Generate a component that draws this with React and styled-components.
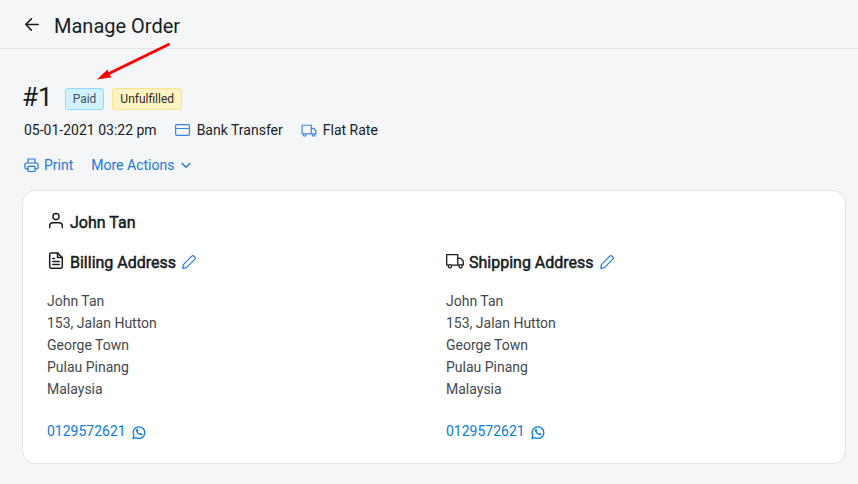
import React from "react";
import styled, { createGlobalStyle } from "styled-components";

const GlobalStyle = createGlobalStyle`
  *, *::before, *::after { box-sizing: border-box; }
  body {
    margin: 0;
    background: #f4f6f8;
    color: #161d25;
    font-family: Roboto, "Liberation Sans", sans-serif;
    font-size: 14px;
    line-height: 22px;
  }
`;

const Page = styled.div`
  min-height: 100vh;
  background: #f4f6f8;
`;

const Header = styled.header`
  position: relative;
  display: flex;
  align-items: center;
  gap: 14px;
  height: 49px;
  padding: 4px 24px 0;
  border-bottom: 1px solid #e1e3e5;
`;

const PlainButton = styled.button`
  display: inline-flex;
  align-items: center;
  padding: 0;
  border: 0;
  background: none;
  color: ${({ $tone }) => $tone || "#2079dc"};
  font: inherit;
  cursor: pointer;
`;

const Title = styled.h1`
  margin: 0;
  font-size: 20px;
  font-weight: 400;
  line-height: 28px;
`;

const Pointer = styled.svg`
  position: absolute;
  top: 40px;
  left: 94px;
  pointer-events: none;
`;

const Main = styled.main`
  padding: 32px 12px 20px 22px;
`;

const OrderHeading = styled.div`
  display: flex;
  align-items: center;
  gap: 8px;
  height: 32px;
`;

const OrderNumber = styled.h2`
  margin: 0;
  padding-right: 4px;
  font-size: 26px;
  font-weight: 400;
  line-height: 32px;
`;

const Badge = styled.span`
  height: 22px;
  margin-top: 4px;
  padding: 0 7px;
  border: 1px solid ${({ $paid }) => ($paid ? "#8fd8ff" : "#fbe38a")};
  border-radius: 3px;
  background: ${({ $paid }) => ($paid ? "#d0f2ff" : "#fff3c4")};
  color: ${({ $paid }) => ($paid ? "#41525c" : "#2b2b20")};
  font-size: 12px;
  line-height: 20px;
`;

const InfoRow = styled.div`
  display: flex;
  align-items: center;
  gap: 18px;
  margin-top: 6px;
  padding-left: 2px;
`;

const InfoItem = styled.span`
  display: inline-flex;
  align-items: center;
  gap: 6px;

  svg { color: #3b82e6; }
`;

const Actions = styled.div`
  display: flex;
  gap: 18px;
  margin-top: 13px;
  padding-left: 2px;
`;

const Action = styled(PlainButton)`
  gap: 5px;
`;

const Card = styled.section`
  margin-top: 14px;
  padding: 20px 24px;
  border: 1px solid #e1e3e5;
  border-radius: 13px;
  background: #fff;
`;

const CardHeading = styled.h3`
  display: flex;
  align-items: center;
  gap: 5px;
  margin: 0;
  font-size: 16px;
  font-weight: 400;
  -webkit-text-stroke: 0.5px currentColor;
  line-height: 24px;

  > svg { margin-bottom: 4px; }
  > button { margin-bottom: 2px; }
`;

const Columns = styled.div`
  display: grid;
  grid-template-columns: 1fr 1fr;
  gap: 24px;
  margin-top: 16px;
`;

const Address = styled.address`
  margin: 15px 0 20px;
  color: #43484e;
  font-style: normal;
`;

const Phone = styled.a`
  display: inline-flex;
  align-items: center;
  gap: 6px;
  margin-bottom: 1px;
  color: #0b7bdc;
  text-decoration: none;

  svg { margin-top: 2px; }
`;

function Icon({ width = 16, height = 16, stroke = 1.2, children }) {
  return (
    <svg
      width={width}
      height={height}
      viewBox={`0 0 ${width} ${height}`}
      fill="none"
      stroke="currentColor"
      strokeWidth={stroke}
      strokeLinecap="round"
      strokeLinejoin="round"
      aria-hidden="true"
    >
      {children}
    </svg>
  );
}

const BackIcon = () => (
  <Icon stroke={1.5}>
    <path d="M14.2 6.5H1.8M7.3 .9L1.8 6.5L7.3 12.1" />
  </Icon>
);

const CreditCardIcon = () => (
  <Icon>
    <rect x="0.6" y="2.6" width="13.8" height="10.8" rx="1.3" />
    <path d="M0.6 6.5H14.4" />
  </Icon>
);

const TruckIcon = ({ large }) => (
  <svg
    width={large ? 18 : 16}
    height={large ? 18 : 15}
    viewBox="0 0 18 18"
    fill="none"
    stroke="currentColor"
    strokeWidth={large ? 1.3 : 1.4}
    strokeLinejoin="round"
    aria-hidden="true"
  >
    <path d="M2.3 13.1H.7V2.7H11.8V13.1H5.5M11.8 6.4H14.7L17.3 9.3V13.1H16.2M11.8 13.1H13" />
    <circle cx="3.9" cy="14.2" r="1.6" />
    <circle cx="14.6" cy="14.2" r="1.6" />
  </svg>
);

const PrintIcon = () => (
  <Icon width={15}>
    <path d="M4 6V2H11V6M4 11.8H2.2C1.4 11.8 .9 11.3 .9 10.5V7.4C.9 6.6 1.4 6 2.2 6H12.8C13.6 6 14.1 6.6 14.1 7.4V10.5C14.1 11.3 13.6 11.8 12.8 11.8H11" />
    <rect x="4" y="9.3" width="7" height="5.2" rx="0.7" />
  </Icon>
);

const ChevronIcon = () => (
  <Icon width={14} stroke={1.4}>
    <path d="M3.2 6.6L7 10.2L10.8 6.6" />
  </Icon>
);

const UserIcon = () => (
  <Icon width={18} height={18} stroke={1.4}>
    <circle cx="9" cy="4.6" r="3.1" />
    <path d="M2.7 15.8V13.8C2.7 12 4.1 10.8 5.9 10.8H12.1C13.9 10.8 15.3 12 15.3 13.8V15.8" />
  </Icon>
);

const DocumentIcon = () => (
  <Icon width={18} height={18} stroke={1.5}>
    <path d="M10.5 .9H4.2C3.3 .9 2.7 1.5 2.7 2.4V14.8C2.7 15.7 3.3 16.3 4.2 16.3H13.8C14.7 16.3 15.3 15.7 15.3 14.8V5.6Z" />
    <path d="M10.5 .9V5.6H15.3M5.8 6.5H7.5M5.8 9.5H12.2M5.8 12.5H12.2" />
  </Icon>
);

const PencilIcon = () => (
  <Icon>
    <path d="M1.8 14.4L2.3 10.6L10.8 2.1C11.5 1.4 12.2 1.4 12.9 2.1L13.9 3.1C14.6 3.8 14.6 4.5 13.9 5.2L5.4 13.7Z" />
  </Icon>
);

const WhatsAppIcon = () => (
  <Icon width={15} height={15} stroke={1.3}>
    <path d="M1 13.6L1.9 10.4A5.8 5.8 0 1 1 4.2 12.7Z" />
    <path
      d="M4.6 4.1C5 3.7 5.5 3.8 5.7 4.3L6.1 5.3C6.2 5.6 5.9 5.9 5.7 6.2C6.2 7.3 6.9 8 8.1 8.6C8.4 8.3 8.6 8 9 8.1L10.2 8.7C10.6 8.9 10.4 9.5 10.1 9.9C9.3 10.7 8.1 10.3 6.9 9.6C5.7 8.9 4.8 7.9 4.3 6.8C3.8 5.7 3.9 4.8 4.6 4.1Z"
      fill="currentColor"
      stroke="none"
    />
  </Icon>
);

const addressLines = [
  "John Tan",
  "153, Jalan Hutton",
  "George Town",
  "Pulau Pinang",
  "Malaysia",
];

function AddressBlock({ icon, title }) {
  return (
    <div>
      <CardHeading>
        {icon}
        {title}
        <PlainButton type="button" aria-label={`Edit ${title}`}>
          <PencilIcon />
        </PlainButton>
      </CardHeading>
      <Address>
        {addressLines.map((line) => (
          <div key={line}>{line}</div>
        ))}
      </Address>
      <Phone href="tel:0129572621">
        0129572621
        <WhatsAppIcon />
      </Phone>
    </div>
  );
}

export default function App() {
  return (
    <Page>
      <GlobalStyle />
      <Header>
        <PlainButton type="button" aria-label="Back" $tone="#161d25">
          <BackIcon />
        </PlainButton>
        <Title>Manage Order</Title>
        <Pointer width="80" height="44" viewBox="0 0 80 44" aria-hidden="true">
          <path d="M74.5 4.5L13 34.5" stroke="#fe0000" strokeWidth="3" strokeLinecap="round" />
          <path d="M3 39.5L13.8 29.2L14.5 33.5L17.8 37.2Z" fill="#fe0000" />
        </Pointer>
      </Header>
      <Main>
        <OrderHeading>
          <OrderNumber>#1</OrderNumber>
          <Badge $paid>Paid</Badge>
          <Badge>Unfulfilled</Badge>
        </OrderHeading>
        <InfoRow>
          <time dateTime="2021-01-05T15:22">05-01-2021 03:22 pm</time>
          <InfoItem>
            <CreditCardIcon />
            Bank Transfer
          </InfoItem>
          <InfoItem>
            <TruckIcon />
            Flat Rate
          </InfoItem>
        </InfoRow>
        <Actions>
          <Action type="button">
            <PrintIcon />
            Print
          </Action>
          <Action type="button">
            More Actions
            <ChevronIcon />
          </Action>
        </Actions>
        <Card>
          <CardHeading>
            <UserIcon />
            John Tan
          </CardHeading>
          <Columns>
            <AddressBlock icon={<DocumentIcon />} title="Billing Address" />
            <AddressBlock icon={<TruckIcon large />} title="Shipping Address" />
          </Columns>
        </Card>
      </Main>
    </Page>
  );
}
